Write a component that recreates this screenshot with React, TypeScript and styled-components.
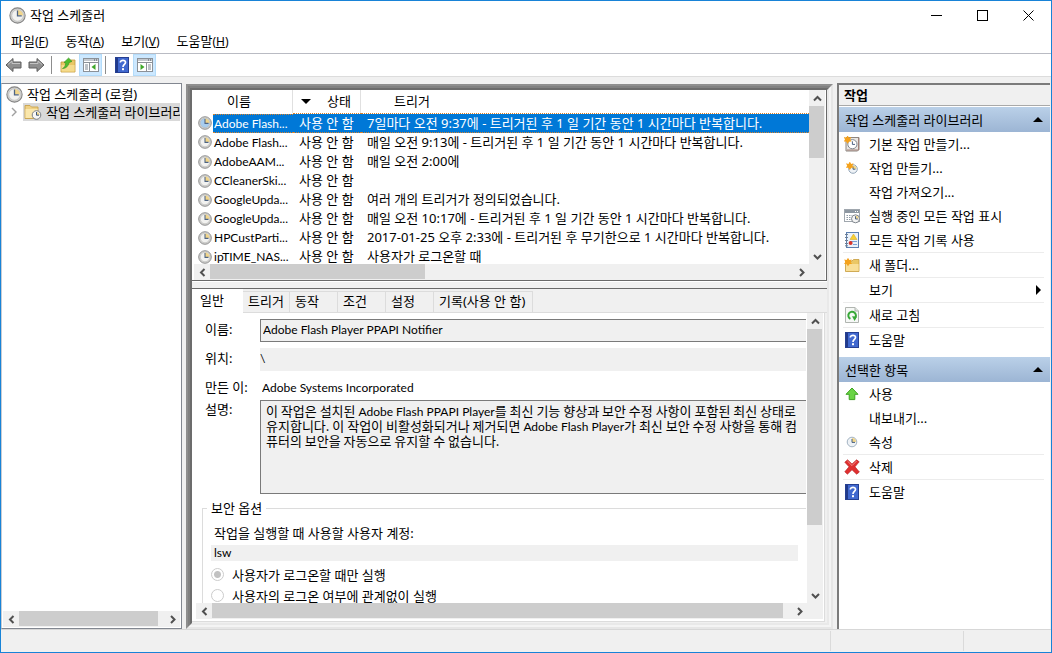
import React from "react";
import styled, { createGlobalStyle, css } from "styled-components";

const latin = `Lato, "Noto Sans CJK KR", sans-serif`;

const GlobalStyle = createGlobalStyle`
  * { box-sizing: border-box; }
  body { margin: 0; }
  body, button, input, textarea, select {
    font-family: "Noto Sans", "Noto Sans CJK KR", sans-serif;
    font-size: 13px;
    line-height: 18px;
    color: #000;
  }
  button { border: 0; padding: 0; background: none; text-align: left; }
  svg { display: block; flex: none; }
`;

/* ---------- window frame ---------- */

const Window = styled.div`
  display: flex;
  flex-direction: column;
  height: 100vh;
  border: 1px solid #1883d7;
  background: #f0f0f0;
  overflow: hidden;
`;

const TitleBar = styled.header`
  display: flex;
  align-items: center;
  height: 28px;
  padding-left: 8px;
  background: #fff;
`;

const Title = styled.h1`
  flex: 1;
  margin: 0 0 0 4px;
  font-size: 13px;
  font-weight: 400;
`;

const CaptionButton = styled.button`
  display: flex;
  align-items: center;
  justify-content: center;
  width: 46px;
  height: 28px;
`;

const MenuBar = styled.nav`
  display: flex;
  gap: 17px;
  height: 25px;
  padding: 3px 10px;
  border-bottom: 1px solid #b9bbc3;
  background: #fff;
`;

const MenuButton = styled.button`
  white-space: nowrap;
  u { text-underline-offset: 1px; }
`;

const MenuKey = styled.span`
  font-size: 12px;
`;

const ToolBar = styled.div`
  display: flex;
  align-items: center;
  height: 23px;
  padding-left: 1px;
  border-bottom: 1px solid #dcdcdc;
  background: #fff;
`;

const ToolButton = styled.button<{ $on?: boolean }>`
  display: flex;
  align-items: center;
  justify-content: center;
  width: 23px;
  height: 22px;
  ${(p) =>
    p.$on &&
    css`
      background: #cce8ff;
      box-shadow: inset 0 0 0 1px #b4dcfa;
    `}
`;

const ToolDivider = styled.span`
  width: 1px;
  height: 18px;
  margin: 0 4px 0 3px;
  background: #8d8d8d;
`;

const Main = styled.main`
  flex: 1;
  min-height: 0;
  display: grid;
  grid-template-columns: 181px minmax(0, 1fr) 214px;
  column-gap: 4px;
  padding-top: 6px;
`;

const StatusBar = styled.footer`
  display: flex;
  justify-content: flex-end;
  height: 23px;
  border-top: 1px solid #d7d7d7;
`;

const StatusCell = styled.span<{ $w: number }>`
  width: ${(p) => p.$w}px;
  margin: 1px 0;
  border-left: 1px solid #dadada;
`;

/* ---------- scroll bars ---------- */

const Track = styled.div<{ $vertical?: boolean; $corner?: boolean }>`
  display: flex;
  flex-direction: ${(p) => (p.$vertical ? "column" : "row")};
  flex: none;
  background: #f0f0f0;
  ${(p) => (p.$vertical ? "width: 16px;" : "height: 16px;")}
  ${(p) => p.$corner && "padding-right: 16px;"}
`;

const ArrowButton = styled.button`
  display: flex;
  align-items: center;
  justify-content: center;
  flex: none;
  width: 16px;
  height: 16px;
`;

const Space = styled.div<{ $grow: number }>`
  flex: ${(p) => p.$grow} 1 0;
`;

const Thumb = styled.div<{ $grow: number; $vertical?: boolean }>`
  flex: ${(p) => p.$grow} 1 0;
  background: #cdcdcd;
  ${(p) => (p.$vertical ? "margin-right: 1px;" : "margin-bottom: 1px;")}
`;

const chevrons = {
  up: "M1 6.5 L4.5 3 L8 6.5",
  down: "M1 3 L4.5 6.5 L8 3",
  left: "M6.5 1 L3 4.5 L6.5 8",
  right: "M3 1 L6.5 4.5 L3 8",
};

function Arrow({ dir, label }: { dir: keyof typeof chevrons; label: string }) {
  return (
    <ArrowButton type="button" aria-label={label}>
      <svg width="9" height="9" viewBox="0 0 9 9">
        <path d={chevrons[dir]} fill="none" stroke="#505050" strokeWidth="2" />
      </svg>
    </ArrowButton>
  );
}

type ScrollBarProps = { vertical?: boolean; corner?: boolean; thumb: number; rest: number };

function ScrollBar({ vertical, corner, thumb, rest }: ScrollBarProps) {
  return (
    <Track $vertical={vertical} $corner={corner}>
      <Arrow dir={vertical ? "up" : "left"} label={vertical ? "위로" : "왼쪽으로"} />
      <Thumb $grow={thumb} $vertical={vertical} />
      <Space $grow={rest} />
      <Arrow dir={vertical ? "down" : "right"} label={vertical ? "아래로" : "오른쪽으로"} />
    </Track>
  );
}

/* ---------- tree pane ---------- */

const TreePane = styled.section`
  display: flex;
  flex-direction: column;
  min-width: 0;
  border: 1px solid #828790;
  border-left-color: #c9ccd2;
  padding: 1px;
  background: #fff;
`;

const Tree = styled.ul`
  flex: 1;
  min-height: 0;
  margin: 0;
  padding: 0;
  list-style: none;
  overflow: hidden;
`;

const TreeRow = styled.li`
  display: flex;
  align-items: center;
  height: 18px;
  padding-left: 3px;
  overflow: hidden;
`;

const Expander = styled.button`
  display: flex;
  flex: none;
  justify-content: center;
  width: 17px;
`;

const TreeLabel = styled.button<{ $selected?: boolean }>`
  display: flex;
  flex: none;
  align-items: center;
  gap: 4px;
  height: 18px;
  white-space: nowrap;
  ${(p) => p.$selected && "padding-left: 1px; background: #d9d9d9;"}
`;

/* ---------- centre pane ---------- */

const Bevel = styled.div<{ $dark: string; $light: string }>`
  display: flex;
  flex-direction: column;
  flex: 1;
  min-width: 0;
  min-height: 0;
  border: 2px solid;
  border-color: ${(p) => `${p.$dark} ${p.$light} ${p.$light} ${p.$dark}`};
`;

const Centre = styled.section`
  display: flex;
  min-width: 0;
  min-height: 0;
  padding-top: 1px;
`;

const ListPanel = styled.div`
  display: flex;
  flex-direction: column;
  flex: none;
  height: 191px;
  padding: 0 1px 0 2px;
  border-right: 1px solid #696969;
  border-bottom: 1px solid #696969;
  background: #fff;
`;

const ListBody = styled.div`
  display: flex;
  flex: 1;
  min-height: 0;
`;

const ListView = styled.div`
  flex: 1;
  min-width: 0;
  overflow: hidden;
`;

const TaskTable = styled.table`
  width: 100%;
  table-layout: fixed;
  border-collapse: collapse;
  th, td { padding: 0; text-align: left; font-weight: 400; white-space: nowrap; }
`;

const HeadCell = styled.th<{ $w?: number }>`
  ${(p) => p.$w && `width: ${p.$w}px;`}
  height: 23px;
`;

const HeadLabel = styled.div<{ $pad: number; $last?: boolean }>`
  display: flex;
  align-items: center;
  gap: 16px;
  height: 23px;
  padding-left: ${(p) => p.$pad}px;
  padding-bottom: 1px;
  border-right: ${(p) => (p.$last ? 0 : 1)}px solid #e0e0e0;
`;

const NameCell = styled.div`
  display: flex;
  align-items: center;
  gap: 1px;
  padding-left: 4px;
  height: 19px;
  span {
    flex: 1;
    height: 19px;
    padding-left: 1px;
    font-family: ${latin};
    font-size: 12px;
    line-height: 20px;
  }
`;

const Cell = styled.td`
  && { padding-left: 6px; }
  height: 19px;
  line-height: 19px;
`;

const Row = styled.tr<{ $selected?: boolean }>`
  height: 19px;
  ${(p) =>
    p.$selected &&
    css`
      color: #fff;
      td { line-height: 17px; }
      td + td, td:first-child span {
        background: #0078d7;
        border-top: 1px dotted #d9822b;
        border-bottom: 1px dotted #d9822b;
      }
      td:first-child span { line-height: 18px; }
    `}
`;

const Splitter = styled.div`
  flex: none;
  height: 8px;
  border-top: 1px solid #fff;
  border-bottom: 1px solid #696969;
`;

const Tabs = styled.div`
  display: flex;
  flex: none;
  height: 24px;
  border-bottom: 1px solid #dcdcdc;
`;

const Tab = styled.button<{ $w: number; $active?: boolean }>`
  width: ${(p) => p.$w}px;
  padding: 0 0 2px 5px;
  margin-top: 2px;
  white-space: nowrap;
  border: solid #dcdcdc;
  border-width: 1px 1px 0 0;
  ${(p) =>
    p.$active &&
    css`
      margin: 0 0 -1px;
      padding: 0 0 4px 8px;
      background: #fff;
      border-color: #fff;
    `}
`;

const TabPanel = styled.div`
  display: flex;
  flex-direction: column;
  flex: 1;
  min-height: 0;
  margin: 0 2px 1px 0;
  padding: 0 1px 2px 4px;
  border: solid #dcdcdc;
  border-width: 0 1px 1px 0;
  background: #fff;
`;

const PanelBody = styled.div`
  display: flex;
  flex: 1;
  min-height: 0;
`;

const Form = styled.form`
  flex: 1;
  min-width: 0;
  padding: 6px 1px 0 9px;
  overflow: hidden;
`;

const Fields = styled.div`
  display: grid;
  grid-template-columns: 55px minmax(0, 1fr);
  grid-auto-rows: 23px;
  row-gap: 6px;
  label { line-height: 20px; white-space: nowrap; }
`;

const Field = styled.input<{ $kind: "box" | "flat" | "plain" }>`
  width: 100%;
  height: 23px;
  margin: 0;
  padding: 0 0 2px 2px;
  border-radius: 0;
  outline: none;
  border: solid #7a7a7a;
  border-width: ${(p) => (p.$kind === "box" ? "1px 0 1px 1px" : "0")};
  background: ${(p) => (p.$kind === "plain" ? "#fff" : "#f0f0f0")};
  font-family: ${latin};
  font-size: 12px;
  ${(p) => p.$kind === "flat" && "padding-left: 0;"}
`;

const Description = styled.div`
  height: 94px;
  padding: 2px 0 0 5px;
  border: solid #7a7a7a;
  border-width: 1px 0 1px 1px;
  outline: none;
  overflow: hidden;
  white-space: pre;
  font-family: "Noto Sans CJK KR", sans-serif;
  line-height: 15px;
  background: #f0f0f0;
`;

const LatinRun = styled.span`
  font-family: Lato, sans-serif;
  font-size: 12px;
  line-height: 12px;
`;

const DescriptionRow = styled.div`
  display: grid;
  grid-template-columns: 55px minmax(0, 1fr);
`;

const Security = styled.fieldset`
  min-width: 0;
  margin: 6px 0 0 -3px;
  padding: 8px 8px 0 8px;
  border: solid #dcdcdc;
  border-width: 1px 0 0 1px;
  legend { padding: 0 4px; margin-left: -4px; line-height: 16px; }
`;

const AccountLabel = styled.label`
  display: block;
  padding-left: 3px;
  height: 21px;
`;

const Account = styled.input`
  display: block;
  width: 100%;
  height: 16px;
  margin-bottom: 3px;
  padding: 0 3px;
  border: 0;
  background: #f0f0f0;
  font-family: ${latin};
  font-size: 12px;
`;

const RadioRow = styled.label`
  display: flex;
  align-items: center;
  gap: 8px;
  height: 21px;
  line-height: 14px;
  white-space: nowrap;
`;

const Radio = styled.input`
  appearance: none;
  flex: none;
  width: 13px;
  height: 13px;
  margin: 0;
  border: 1px solid #cccccc;
  border-radius: 50%;
  background: #fff;
  &:checked { background: radial-gradient(circle, #c2c2c2 3px, #fff 4px); }
`;

/* ---------- actions pane ---------- */

const ActionsPane = styled.aside`
  display: flex;
  flex-direction: column;
  border-top: 2px solid #7b7b7b;
  border-left: 2px solid #7b7b7b;
  margin-right: 1px;
  background: #fff;
`;

const PaneTitle = styled.h2`
  height: 21px;
  margin: 0 0 1px;
  padding: 1px 5px;
  font-size: 13px;
  font-weight: 700;
  border-bottom: 1px solid #a9a9a9;
  background: #f0f0f0;
`;

const GroupHeader = styled.button`
  display: flex;
  align-items: center;
  justify-content: space-between;
  width: 100%;
  height: 25px;
  padding: 0 7px 0 6px;
  background: linear-gradient(#bad0e8, #9cb5d4);
`;

const ActionList = styled.ul`
  margin: 0;
  padding: 0 0 5px;
  list-style: none;
`;

const ActionItem = styled.li<{ $ruled?: boolean }>`
  margin: 0 6px 0 4px;
  border-bottom: ${(p) => (p.$ruled ? 1 : 0)}px solid #ececec;
`;

const ActionButton = styled.button`
  display: flex;
  align-items: center;
  width: 100%;
  height: 24px;
  span:first-child {
    display: flex;
    justify-content: center;
    width: 18px;
    margin-right: 8px;
  }
  svg:last-child { margin-right: 1px; }
`;

const ActionLabel = styled.span`
  flex: 1;
  white-space: nowrap;
`;

/* ---------- icons ---------- */

function Clock({ size, tint = "#f2f2f0" }: { size: number; tint?: string }) {
  return (
    <svg width={size} height={size} viewBox="0 0 16 16">
      <circle cx="8" cy="8" r="7.2" fill="#d4d4d2" stroke="#858585" strokeWidth="1" />
      <circle cx="8" cy="8" r="5.4" fill={tint} stroke="#b5b5b5" strokeWidth=".6" />
      <path d="M8 8 V2.8 A5.2 5.2 0 0 1 13.2 8 Z" fill="#f0d58b" />
      <path d="M8 3.4 V8.4 H12" fill="none" stroke="#4e6483" strokeWidth="1.2" />
    </svg>
  );
}

function SmallClock() {
  return (
    <svg width="12" height="12" viewBox="0 0 12 12">
      <circle cx="6" cy="6" r="4.8" fill="#eef2f6" stroke="#a3b3c2" />
      <path d="M6 6 V2 A4 4 0 0 1 10 6 Z" fill="#f3d68a" />
      <path d="M6 3 V6.4 H9" fill="none" stroke="#466080" />
    </svg>
  );
}

function NavArrow({ flip }: { flip?: boolean }) {
  return (
    <svg width="17" height="16" viewBox="0 0 17 16">
      <g transform={flip ? "translate(17 0) scale(-1 1)" : undefined}>
        <path d="M1 8 L8 1.5 V5 H16 V11 H8 V14.5 Z" fill="#8f8f8f" stroke="#5f5f5f" />
        <path d="M3 7.5 L7 4 V6.5 H15" fill="none" stroke="#c4c4c4" />
      </g>
    </svg>
  );
}

function FolderUp() {
  return (
    <svg width="16" height="16" viewBox="0 0 16 16">
      <path d="M1 5 H9 L10.5 3 H15 V15 H1 Z" fill="#e9c766" stroke="#c29a3c" strokeWidth=".8" />
      <path d="M1.5 8 H14.6 V14.6 H1.5 Z" fill="#f5db8c" />
      <path d="M2.5 11.5 C4.4 10.6 5.4 8.8 5.8 6.2 L4 5.4 L8.6 1 L12 4.4 L9 5.6 C8.4 9 6 11.6 2.5 11.5 Z" fill="#4fbd2d" stroke="#2f8e1c" strokeWidth=".6" />
    </svg>
  );
}

function PaneIcon({ right }: { right?: boolean }) {
  return (
    <svg width="16" height="14" viewBox="0 0 16 14">
      <rect x=".5" y=".5" width="15" height="13" fill="#fff" stroke="#8b9198" />
      <path d="M1 2 H15" stroke="#c4c9cf" strokeWidth="2" />
      <path d="M1 4.5 H15" stroke="#8b9198" />
      <path d="M11 2 H12 M13 2 H14" stroke="#49535e" />
      {right ? (
        <>
          <path d="M9.5 5 V13" stroke="#8b9198" />
          <path d="M11 7 H14 M11 9 H14 M11 11 H14" stroke="#7c8692" />
          <path d="M3.5 6 L7.5 9 L3.5 12 Z" fill="#3fa82b" />
        </>
      ) : (
        <>
          <path d="M6.5 5 V13" stroke="#8b9198" />
          <path d="M2 7 H5 M2 9 H5 M2 11 H5" stroke="#7c8692" />
          <path d="M12.5 6 L8.5 9 L12.5 12 Z" fill="#3fa82b" />
        </>
      )}
    </svg>
  );
}

function HelpIcon() {
  return (
    <svg width="14" height="16" viewBox="0 0 14 16">
      <rect x=".5" y=".5" width="13" height="15" fill="#4068cf" stroke="#253f92" />
      <path d="M2 1 V15" stroke="#213a8a" strokeWidth="2" />
      <path d="M5.3 5.6 C5.3 2.6 10.8 2.6 10.5 5.7 C10.3 7.4 8 7.5 8 10" fill="none" stroke="#fff" strokeWidth="1.7" />
      <rect x="7" y="11.2" width="2" height="2" fill="#fff" />
    </svg>
  );
}

function FolderClock() {
  return (
    <svg width="18" height="16" viewBox="0 0 18 16">
      <path d="M1 1.5 H6 L7.5 3 H14 V14.5 H1 Z" fill="#efd084" stroke="#c8a34c" strokeWidth=".9" />
      <path d="M1.5 5 H13.6 V14 H1.5 Z" fill="#fae7ac" />
      <circle cx="12.5" cy="11" r="4.3" fill="#f7f7f7" stroke="#7a7f86" />
      <path d="M12.5 11 V8 A3 3 0 0 1 15.5 11 Z" fill="#f0d58b" />
      <path d="M12.5 8 V11.2 H15" fill="none" stroke="#3f5678" />
    </svg>
  );
}

function Spark({ x, y }: { x: number; y: number }) {
  return (
    <path
      transform={`translate(${x} ${y})`}
      d="M0 -4.2 L1.4 -1.9 L3.8 -2.6 L2.6 0 L4 2 L1.6 2 L0 4.2 L-1.6 2 L-4 2 L-2.6 0 L-3.8 -2.6 L-1.4 -1.9 Z"
      fill="#f5a21c"
    />
  );
}

function BasicTask() {
  return (
    <svg width="16" height="16" viewBox="0 0 16 16">
      <path d="M2 1.5 H15 V13.5 L13.5 15 H2 Z" fill="#e9e6e2" stroke="#8c8580" />
      <path d="M14.5 2 V14 H3" fill="none" stroke="#a3827a" />
      <circle cx="8.4" cy="8.2" r="4.6" fill="#fff" stroke="#7f858c" />
      <path d="M8.4 5.3 V8.4 H11" fill="none" stroke="#4d6382" />
      <Spark x={3.6} y={3.6} />
    </svg>
  );
}

function NewTask() {
  return (
    <svg width="12" height="12" viewBox="0 0 12 12">
      <circle cx="7" cy="7" r="4.3" fill="#eef2f6" stroke="#94a6b8" />
      <path d="M7 7 V3.6 A3.4 3.4 0 0 1 10.4 7 Z" fill="#f3d68a" />
      <path d="M7 4.5 V7.2 H9.4" fill="none" stroke="#466080" />
      <Spark x={3.8} y={3.8} />
    </svg>
  );
}

function RunningTasks() {
  return (
    <svg width="16" height="16" viewBox="0 0 16 16">
      <rect x=".5" y="1.5" width="15" height="12" fill="#fff" stroke="#a0a7ae" />
      <path d="M1 3.5 H15" stroke="#8d97a1" strokeWidth="3" />
      <path d="M11 3.5 H12 M13 3.5 H14" stroke="#fff" />
      <path d="M2.5 7.5 H8 M2.5 9.5 H7 M2.5 11.5 H7" stroke="#8f9aa6" strokeDasharray="1.5 1" />
      <circle cx="11.5" cy="10.8" r="4" fill="#f4f4f4" stroke="#7d848c" />
      <path d="M11.5 10.8 V7.8 A3 3 0 0 1 14.5 10.8 Z" fill="#f0d58b" />
      <path d="M11.5 8.3 V11 H13.8" fill="none" stroke="#4d6382" />
    </svg>
  );
}

function History() {
  return (
    <svg width="16" height="16" viewBox="0 0 16 16">
      <rect x="2.5" y=".5" width="12" height="15" fill="#eaf2fb" stroke="#5c7fb0" />
      <path d="M1 2.5 H4 M1 5.5 H4 M1 8.5 H4 M1 11.5 H4 M1 13.8 H4" stroke="#6f7f92" />
      <path d="M6 9.5 H13 M9 12.5 H13" stroke="#7aa0d4" />
      <path d="M9.5 2 L13 7.5 H6 Z" fill="#f7cf33" stroke="#cfa21d" strokeWidth=".5" />
      <circle cx="6.6" cy="11" r="2" fill="#d9342b" />
    </svg>
  );
}

function NewFolder() {
  return (
    <svg width="16" height="14" viewBox="0 0 16 14">
      <path d="M1.5 3 H8 L9.5 1.5 H15 V13.5 H1.5 Z" fill="#ebc765" stroke="#c79d3f" strokeWidth=".8" />
      <path d="M2 6 H14.6 V13 H2 Z" fill="#f9df98" />
      <Spark x={4} y={4} />
    </svg>
  );
}

function Refresh() {
  return (
    <svg width="14" height="16" viewBox="0 0 14 16">
      <path d="M.5 .5 H10 L13.5 4 V15.5 H.5 Z" fill="#f6f8f6" stroke="#b0b5b0" />
      <path d="M10 .5 V4 H13.5" fill="#dfe3df" stroke="#b0b5b0" />
      <path d="M5.4 11.9 A3.8 3.8 0 1 1 9.6 11.4" fill="none" stroke="#38a838" strokeWidth="2" />
      <path d="M7 9.2 L12 9.6 L9.6 14 Z" fill="#38a838" />
    </svg>
  );
}

function EnableIcon() {
  return (
    <svg width="14" height="14" viewBox="0 0 14 14">
      <path d="M7 1 L13 7.3 H9.8 V12.6 H4.2 V7.3 H1 Z" fill="#69d444" stroke="#3ea322" />
    </svg>
  );
}

function DeleteIcon() {
  return (
    <svg width="16" height="16" viewBox="0 0 16 16">
      <path
        d="M3.6 .8 L8 5 L12.6 .8 L15.2 2.8 L11 7.8 L15.4 13 L12.6 15.2 L8 10.8 L3.4 15.2 L.8 12.8 L5 7.8 L.8 3.2 Z"
        fill="#df2f2f"
        stroke="#b51f22"
        strokeWidth=".6"
      />
      <path d="M3.4 2 L8 6.6 L12.6 2" fill="none" stroke="#f28a86" />
    </svg>
  );
}

function Triangle({ dir }: { dir: "up" | "down" | "right" }) {
  const d = { up: "M0 7 L5 2 L10 7 Z", down: "M0 3 H10 L5 8 Z", right: "M3 0 L8 5 L3 10 Z" }[dir];
  return (
    <svg width="10" height="10" viewBox="0 0 10 10">
      <path d={d} fill="#000" />
    </svg>
  );
}

/* ---------- data ---------- */

const menus = [
  ["파일", "F"],
  ["동작", "A"],
  ["보기", "V"],
  ["도움말", "H"],
];

const tasks = [
  ["Adobe Flash...", "7일마다 오전 9:37에 - 트리거된 후 1 일 기간 동안 1 시간마다 반복합니다."],
  ["Adobe Flash...", "매일 오전 9:13에 - 트리거된 후 1 일 기간 동안 1 시간마다 반복합니다."],
  ["AdobeAAM...", "매일 오전 2:00에"],
  ["CCleanerSki...", ""],
  ["GoogleUpda...", "여러 개의 트리거가 정의되었습니다."],
  ["GoogleUpda...", "매일 오전 10:17에 - 트리거된 후 1 일 기간 동안 1 시간마다 반복합니다."],
  ["HPCustParti...", "2017-01-25 오후 2:33에 - 트리거된 후 무기한으로 1 시간마다 반복합니다."],
  ["ipTIME_NAS...", "사용자가 로그온할 때"],
];

const tabs: [string, number][] = [
  ["일반", 51],
  ["트리거", 47],
  ["동작", 48],
  ["조건", 48],
  ["설정", 48],
  ["기록(사용 안 함)", 99],
];

type Action = { label: string; icon?: React.ReactNode; ruled?: boolean; submenu?: boolean };

const groups: { title: string; items: Action[] }[] = [
  {
    title: "작업 스케줄러 라이브러리",
    items: [
      { label: "기본 작업 만들기...", icon: <BasicTask /> },
      { label: "작업 만들기...", icon: <NewTask /> },
      { label: "작업 가져오기..." },
      { label: "실행 중인 모든 작업 표시", icon: <RunningTasks /> },
      { label: "모든 작업 기록 사용", icon: <History />, ruled: true },
      { label: "새 폴더...", icon: <NewFolder />, ruled: true },
      { label: "보기", ruled: true, submenu: true },
      { label: "새로 고침", icon: <Refresh />, ruled: true },
      { label: "도움말", icon: <HelpIcon /> },
    ],
  },
  {
    title: "선택한 항목",
    items: [
      { label: "사용", icon: <EnableIcon /> },
      { label: "내보내기..." },
      { label: "속성", icon: <SmallClock />, ruled: true },
      { label: "삭제", icon: <DeleteIcon />, ruled: true },
      { label: "도움말", icon: <HelpIcon /> },
    ],
  },
];

/* ---------- page ---------- */

function TaskList() {
  return (
    <ListPanel>
      <ListBody>
        <ListView>
          <TaskTable>
            <thead>
              <tr>
                <HeadCell $w={99}><HeadLabel $pad={33}>이름</HeadLabel></HeadCell>
                <HeadCell $w={68}><HeadLabel $pad={8}><Triangle dir="down" />상태</HeadLabel></HeadCell>
                <HeadCell><HeadLabel $pad={33} $last>트리거</HeadLabel></HeadCell>
              </tr>
            </thead>
            <tbody>
              {tasks.map(([name, trigger], i) => (
                <Row key={i} $selected={i === 0}>
                  <td>
                    <NameCell>
                      <Clock size={14} tint={i === 0 ? "#a8cdee" : undefined} />
                      <span>{name}</span>
                    </NameCell>
                  </td>
                  <Cell>사용 안 함</Cell>
                  <Cell>{trigger}</Cell>
                </Row>
              ))}
            </tbody>
          </TaskTable>
        </ListView>
        <ScrollBar vertical thumb={52} rest={91} />
      </ListBody>
      <ScrollBar corner thumb={216} rest={369} />
    </ListPanel>
  );
}

function General() {
  return (
    <TabPanel role="tabpanel">
      <PanelBody>
        <Form>
          <Fields>
            <label htmlFor="name">이름:</label>
            <Field id="name" $kind="box" readOnly value="Adobe Flash Player PPAPI Notifier" />
            <label htmlFor="location">위치:</label>
            <Field id="location" $kind="flat" readOnly value={"\\"} />
            <label htmlFor="author">만든 이:</label>
            <Field id="author" $kind="plain" readOnly value="Adobe Systems Incorporated" />
          </Fields>
          <DescriptionRow>
            <span id="description-label">설명:</span>
            <Description role="textbox" aria-multiline aria-readonly aria-labelledby="description-label" tabIndex={0}>
              이 작업은 설치된 <LatinRun>Adobe Flash PPAPI Player</LatinRun>를 최신 기능 향상과 보안 수정 사항이 포함된 최신 상태로
              <br />
              유지합니다. 이 작업이 비활성화되거나 제거되면 <LatinRun>Adobe Flash Player</LatinRun>가 최신 보안 수정 사항을 통해 컴
              <br />
              퓨터의 보안을 자동으로 유지할 수 없습니다.
            </Description>
          </DescriptionRow>
          <Security>
            <legend>보안 옵션</legend>
            <AccountLabel htmlFor="account">작업을 실행할 때 사용할 사용자 계정:</AccountLabel>
            <Account id="account" readOnly value="lsw" />
            <RadioRow>
              <Radio type="radio" name="logon" defaultChecked />
              사용자가 로그온할 때만 실행
            </RadioRow>
            <RadioRow>
              <Radio type="radio" name="logon" />
              사용자의 로그온 여부에 관계없이 실행
            </RadioRow>
          </Security>
        </Form>
        <ScrollBar vertical thumb={195} rest={62} />
      </PanelBody>
      <ScrollBar corner thumb={570} rest={8} />
    </TabPanel>
  );
}

export default function App() {
  return (
    <Window>
      <GlobalStyle />
      <TitleBar>
        <Clock size={17} />
        <Title>작업 스케줄러</Title>
        <CaptionButton type="button" aria-label="최소화">
          <svg width="11" height="11" viewBox="0 0 11 11"><path d="M0 5.5 H11" stroke="#000" /></svg>
        </CaptionButton>
        <CaptionButton type="button" aria-label="최대화">
          <svg width="11" height="11" viewBox="0 0 11 11"><rect x=".5" y=".5" width="10" height="10" fill="none" stroke="#000" /></svg>
        </CaptionButton>
        <CaptionButton type="button" aria-label="닫기">
          <svg width="11" height="11" viewBox="0 0 11 11"><path d="M.5 .5 L10.5 10.5 M10.5 .5 L.5 10.5" stroke="#000" /></svg>
        </CaptionButton>
      </TitleBar>
      <MenuBar>
        {menus.map(([label, key]) => (
          <MenuButton key={key} type="button">
            {label}<MenuKey>(<u>{key}</u>)</MenuKey>
          </MenuButton>
        ))}
      </MenuBar>
      <ToolBar>
        <ToolButton type="button" aria-label="뒤로"><NavArrow /></ToolButton>
        <ToolButton type="button" aria-label="앞으로"><NavArrow flip /></ToolButton>
        <ToolDivider />
        <ToolButton type="button" aria-label="한 수준 위로"><FolderUp /></ToolButton>
        <ToolButton type="button" aria-label="콘솔 트리 표시" $on><PaneIcon /></ToolButton>
        <ToolDivider />
        <ToolButton type="button" aria-label="도움말"><HelpIcon /></ToolButton>
        <ToolButton type="button" aria-label="작업 창 표시" $on><PaneIcon right /></ToolButton>
      </ToolBar>
      <Main>
        <TreePane>
          <Tree>
            <TreeRow>
              <TreeLabel type="button"><Clock size={17} />작업 스케줄러 (로컬)</TreeLabel>
            </TreeRow>
            <TreeRow>
              <Expander type="button" aria-label="확장">
                <svg width="7" height="10" viewBox="0 0 7 10"><path d="M1 1 L5 5 L1 9" fill="none" stroke="#a0a0a0" strokeWidth="1.4" /></svg>
              </Expander>
              <TreeLabel type="button" $selected><FolderClock />작업 스케줄러 라이브러리</TreeLabel>
            </TreeRow>
          </Tree>
          <ScrollBar thumb={138} rest={6} />
        </TreePane>
        <Centre>
          <Bevel $dark="#8e8e8e" $light="#e6e6e6">
            <Bevel $dark="#808080" $light="#f4f4f4">
              <Bevel $dark="#6c6c6c" $light="#e9e9e9">
                <TaskList />
                <Splitter />
                <Tabs role="tablist">
                  {tabs.map(([label, w], i) => (
                    <Tab key={label} type="button" role="tab" aria-selected={i === 0} $w={w} $active={i === 0}>
                      {label}
                    </Tab>
                  ))}
                </Tabs>
                <General />
              </Bevel>
            </Bevel>
          </Bevel>
        </Centre>
        <ActionsPane>
          <PaneTitle>작업</PaneTitle>
          {groups.map((group) => (
            <React.Fragment key={group.title}>
              <GroupHeader type="button">{group.title}<Triangle dir="up" /></GroupHeader>
              <ActionList>
                {group.items.map((item) => (
                  <ActionItem key={item.label} $ruled={item.ruled}>
                    <ActionButton type="button">
                      <span>{item.icon}</span>
                      <ActionLabel>{item.label}</ActionLabel>
                      {item.submenu && <Triangle dir="right" />}
                    </ActionButton>
                  </ActionItem>
                ))}
              </ActionList>
            </React.Fragment>
          ))}
        </ActionsPane>
      </Main>
      <StatusBar>
        <StatusCell $w={133} />
        <StatusCell $w={88} />
      </StatusBar>
    </Window>
  );
}
